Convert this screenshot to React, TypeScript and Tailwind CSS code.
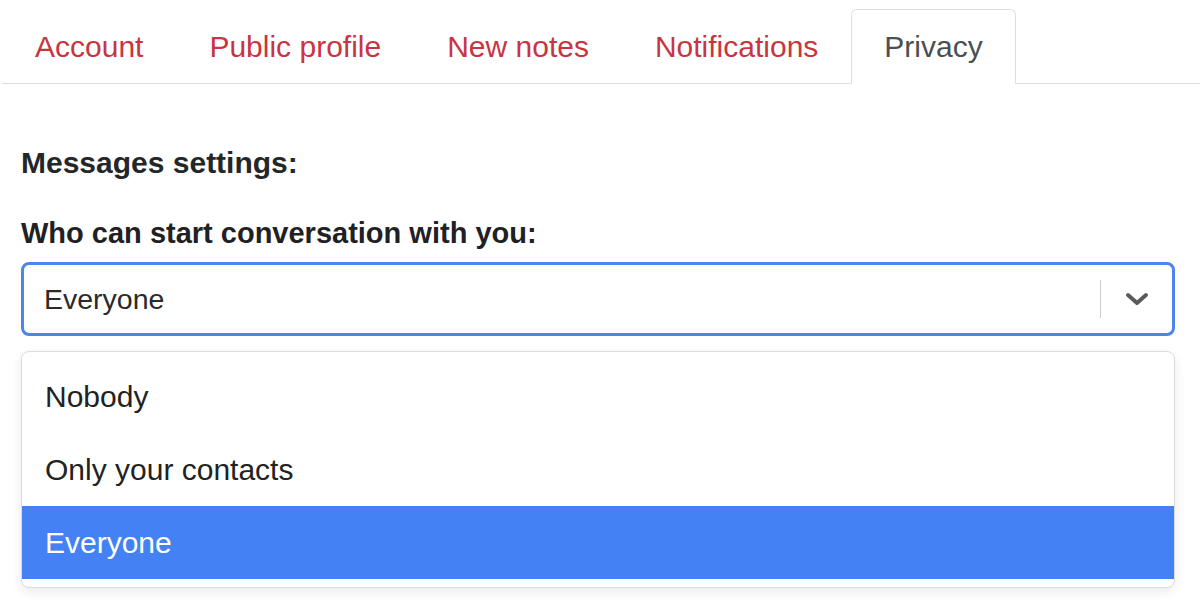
const tabs = ["Account", "Public profile", "New notes", "Notifications", "Privacy"];

const options = ["Nobody", "Only your contacts", "Everyone"];

function Tabs() {
    return (
        <ul className="flex border-b border-[#dedede] ml-[2px] pt-[9px]">
            {tabs.map((tab) => {
                const active = tab === "Privacy";
                return (
                    <li
                        key={tab}
                        className={`-mb-px flex h-[75px] items-center px-[32px] text-[30px] ${
                            active
                                ? "border border-[#dedede] border-b-white bg-white rounded-t-[6px] text-[#4a4f55]"
                                : "border border-transparent text-[#c9353f]"
                        }`}
                    >
                        {tab}
                    </li>
                );
            })}
        </ul>
    );
}

export default function App() {
    const selected = "Everyone";
    return (
        <div
            className="w-[1200px] h-[606px] bg-white overflow-hidden text-[#222]"
            style={{ fontFamily: '"Liberation Sans", Arial, sans-serif' }}
        >
            <Tabs />

            <div className="pl-[21px] pr-[25px] pt-[62px]">
                <h3 className="text-[30px] font-bold leading-[34px] text-[#24272a]">
                    Messages settings:
                </h3>
                <label className="block mt-[36px] text-[29px] font-bold leading-[34px] text-[#1f2124]">
                    Who can start conversation with you:
                </label>

                <div className="mt-[12px] flex h-[74px] items-center rounded-[8px] border-[3px] border-[#4a86ec] bg-white">
                    <span className="flex-1 pl-[20px] text-[28.5px] text-[#2a2a2a]">
                        {selected}
                    </span>
                    <span className="h-[38px] w-px bg-[#cccccc]" />
                    <span className="flex w-[71px] items-center justify-center">
                        <svg width="24" height="16" viewBox="0 0 24 16" fill="none">
                            <path
                                d="M3 4l9 8 9-8"
                                stroke="#5b5b5b"
                                strokeWidth="4"
                                strokeLinecap="round"
                                strokeLinejoin="round"
                            />
                        </svg>
                    </span>
                </div>

                <ul className="mt-[15px] rounded-[8px] border border-[#dcdcdc] bg-white py-[8px] shadow-[0_4px_12px_rgba(0,0,0,0.08)]">
                    {options.map((opt) => (
                        <li
                            key={opt}
                            className={`flex h-[73px] items-center pl-[23px] text-[30px] ${
                                opt === selected ? "bg-[#4381f4] text-white" : "text-[#222]"
                            }`}
                        >
                            {opt}
                        </li>
                    ))}
                </ul>
            </div>
        </div>
    );
}
